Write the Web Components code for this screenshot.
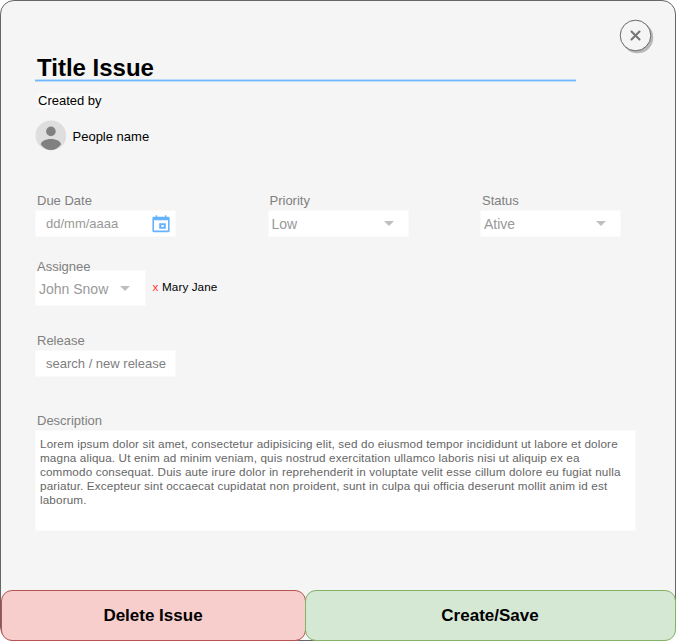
<!DOCTYPE html>
<html lang="en">
<head>
<meta charset="utf-8">
<title>Title Issue</title>
<style>
html,body{margin:0;background:#fff}
body{font-family:"Liberation Sans",Arial,sans-serif;font-size:13px;line-height:15px;color:#000}
</style>
</head>
<body>
<issue-dialog></issue-dialog>
<script>
function define(name, html, setup){
  customElements.define(name, class extends HTMLElement{
    constructor(){
      super();
      const t=document.createElement('template');
      t.innerHTML=html;
      this.attachShadow({mode:'open'}).appendChild(t.content.cloneNode(true));
    }
    connectedCallback(){ if(setup) setup(this,this.shadowRoot); }
  });
}

define('close-button',`<style>
:host{display:block;width:36px;height:36px}
svg{display:block}
</style>
<svg width="36" height="36" viewBox="0 0 36 36">
<circle cx="18.6" cy="18.6" r="15.7" fill="#b8b8b8"/>
<circle cx="16.5" cy="16.5" r="15.3" fill="#f5f5f5" stroke="#666"/>
<path d="M12.5 12.5l8 8M20.5 12.5l-8 8" stroke="#757575" stroke-width="2.1" stroke-linecap="round"/>
</svg>`);

define('user-chip',`<style>
:host{display:flex;align-items:center;gap:6.5px}
svg{display:block;flex:none}
span{padding-top:2px}
</style>
<svg width="31" height="31" viewBox="0 0 31 31">
<ellipse cx="15.9" cy="15.4" rx="15.4" ry="15" fill="#dedede"/>
<circle cx="15.9" cy="11.4" r="4.8" fill="#808080"/>
<path d="M5.800 24.400C6 21.300 10.200 18.900 15.900 18.900s9.900 2.400 10.100 5.500C23.300 27.800 20.200 30.100 15.900 30.100S8.400 27.800 5.800 24.400z" fill="#808080"/>
</svg><span><slot></slot></span>`);

define('calendar-icon',`<style>:host{display:block}svg{display:block}</style>
<svg width="18" height="18" viewBox="0 0 18 18">
<path fill="#66b2ff" fill-rule="evenodd" d="M3.700 0.200h1.400v1.600h7.800V0.200h1.400v1.600h2.200a1.100 1.100 0 0 1 1.100 1.100v13.200a1.100 1.100 0 0 1-1.100 1.100H1.500a1.100 1.100 0 0 1-1.100-1.100V2.900a1.100 1.100 0 0 1 1.100-1.100h2.200zM2 5.200v10.400h14V5.200z"/>
<path fill="#66b2ff" fill-rule="evenodd" d="M7.200 8.200h6.600v5.600H7.200zM9.500 10.100v1.800h2.200v-1.800z"/>
</svg>`);

define('form-field',`<style>
:host{display:block}
label{display:block;position:relative;z-index:1;height:17px;line-height:15px;padding-left:2px;color:#808080;white-space:nowrap}
</style><label></label><slot></slot>`,(h,s)=>{s.querySelector('label').textContent=h.getAttribute('label')});

define('text-box',`<style>
:host{display:flex;box-sizing:border-box;width:141px;height:27px;align-items:center;background:#fff;border:1px solid #fafafa;padding:0 5px 0 10px;color:var(--ink,#999);white-space:nowrap}
.v{flex:1}
</style><span class="v"><slot></slot></span><slot name="icon"></slot>`);

define('select-box',`<style>
:host{display:flex;box-sizing:border-box;width:var(--w,141px);height:var(--h,27px);align-items:center;background:#fff;border:1px solid #fafafa;padding:2px var(--r,14px) 0 3px;color:#999;font-size:14px;line-height:17px;white-space:nowrap}
span{flex:1}
svg{display:block;margin-top:-2px}
</style><span><slot></slot></span>
<svg width="10" height="5" viewBox="0 0 10 5"><path d="M0 0h10L5 5z" fill="#bfbfbf"/></svg>`);

define('assignee-tag',`<style>
:host{display:flex;gap:3.5px;font-size:11.7px;line-height:14px;letter-spacing:.1px;padding-bottom:3px;white-space:nowrap}
b{font-weight:400;color:#f33}
</style><b>x</b><span><slot></slot></span>`);

define('action-button',`<style>
:host{display:flex;box-sizing:border-box;height:51px;align-items:center;justify-content:center;padding-right:1px;border:1px solid var(--line);border-radius:11px;background:var(--fill);font-weight:700;font-size:17px;line-height:20px}
</style><slot></slot>`);

define('issue-dialog',`<style>
:host{display:block}
.panel{display:flex;flex-direction:column;box-sizing:border-box;width:676px;height:641px;border:1px solid #666;border-radius:14px;background:#f5f5f5}
.head{display:flex;justify-content:space-between;height:81px;padding:0 20px 0 34px;box-sizing:border-box}
close-button{margin-top:18px}
h1{box-sizing:border-box;width:541px;height:81px;margin:0;padding:53px 0 0 2px;background:linear-gradient(#bcdcfb 0 1px,#70b7ff 1px 2px,#bcdcfb 2px 3px) 0 100%/100% 3px no-repeat;font-size:24px;line-height:28px}
.body{flex:1;padding:0 34px}
.by{display:block;width:64px;margin:11px 0 0 2px;padding-left:1px;background:#f9f9f9;box-sizing:border-box;white-space:nowrap;height:15px}
user-chip{margin-top:12px}
.row{display:grid;grid-template-columns:232.5px 212.5px auto;margin-top:42px}
.assign{display:flex;align-items:center;gap:6.5px;margin-top:-6px}
.desc{width:601px;height:101px;box-sizing:border-box;background:#fff;border:1px solid #fafafa;padding:6px 4px;color:#666;font-size:11.7px;letter-spacing:.138px;line-height:14px;white-space:nowrap}
.foot{display:grid;grid-template-columns:305px 370px;margin:0 -1px -1px 0}
.save{margin-left:-1px}
</style>
<div class="panel">
<div class="head"><h1>Title Issue</h1><close-button></close-button></div>
<div class="body">
<span class="by">Created by</span>
<user-chip>People name</user-chip>
<div class="row">
<form-field label="Due Date"><text-box>dd/mm/aaaa<calendar-icon slot="icon"></calendar-icon></text-box></form-field>
<form-field label="Priority"><select-box>Low</select-box></form-field>
<form-field label="Status"><select-box>Ative</select-box></form-field>
</div>
<form-field label="Assignee" style="margin-top:22px"><div class="assign"><select-box style="--w:111px;--h:36px;--r:14.6px">John Snow</select-box><assignee-tag>Mary Jane</assignee-tag></div></form-field>
<form-field label="Release" style="margin-top:27px"><text-box style="--ink:#808080">search / new release</text-box></form-field>
<form-field label="Description" style="margin-top:36px"><div class="desc">Lorem ipsum dolor sit amet, consectetur adipisicing elit, sed do eiusmod tempor incididunt ut labore et dolore<br>magna aliqua. Ut enim ad minim veniam, quis nostrud exercitation ullamco laboris nisi ut aliquip ex ea<br>commodo consequat. Duis aute irure dolor in reprehenderit in voluptate velit esse cillum dolore eu fugiat nulla<br>pariatur. Excepteur sint occaecat cupidatat non proident, sunt in culpa qui officia deserunt mollit anim id est<br>laborum.</div></form-field>
</div>
<div class="foot">
<action-button style="--line:#b85450;--fill:#f8cecc">Delete Issue</action-button>
<action-button class="save" style="--line:#82b366;--fill:#d5e8d4">Create/Save</action-button>
</div>
</div>`);
</script>
</body>
</html>
